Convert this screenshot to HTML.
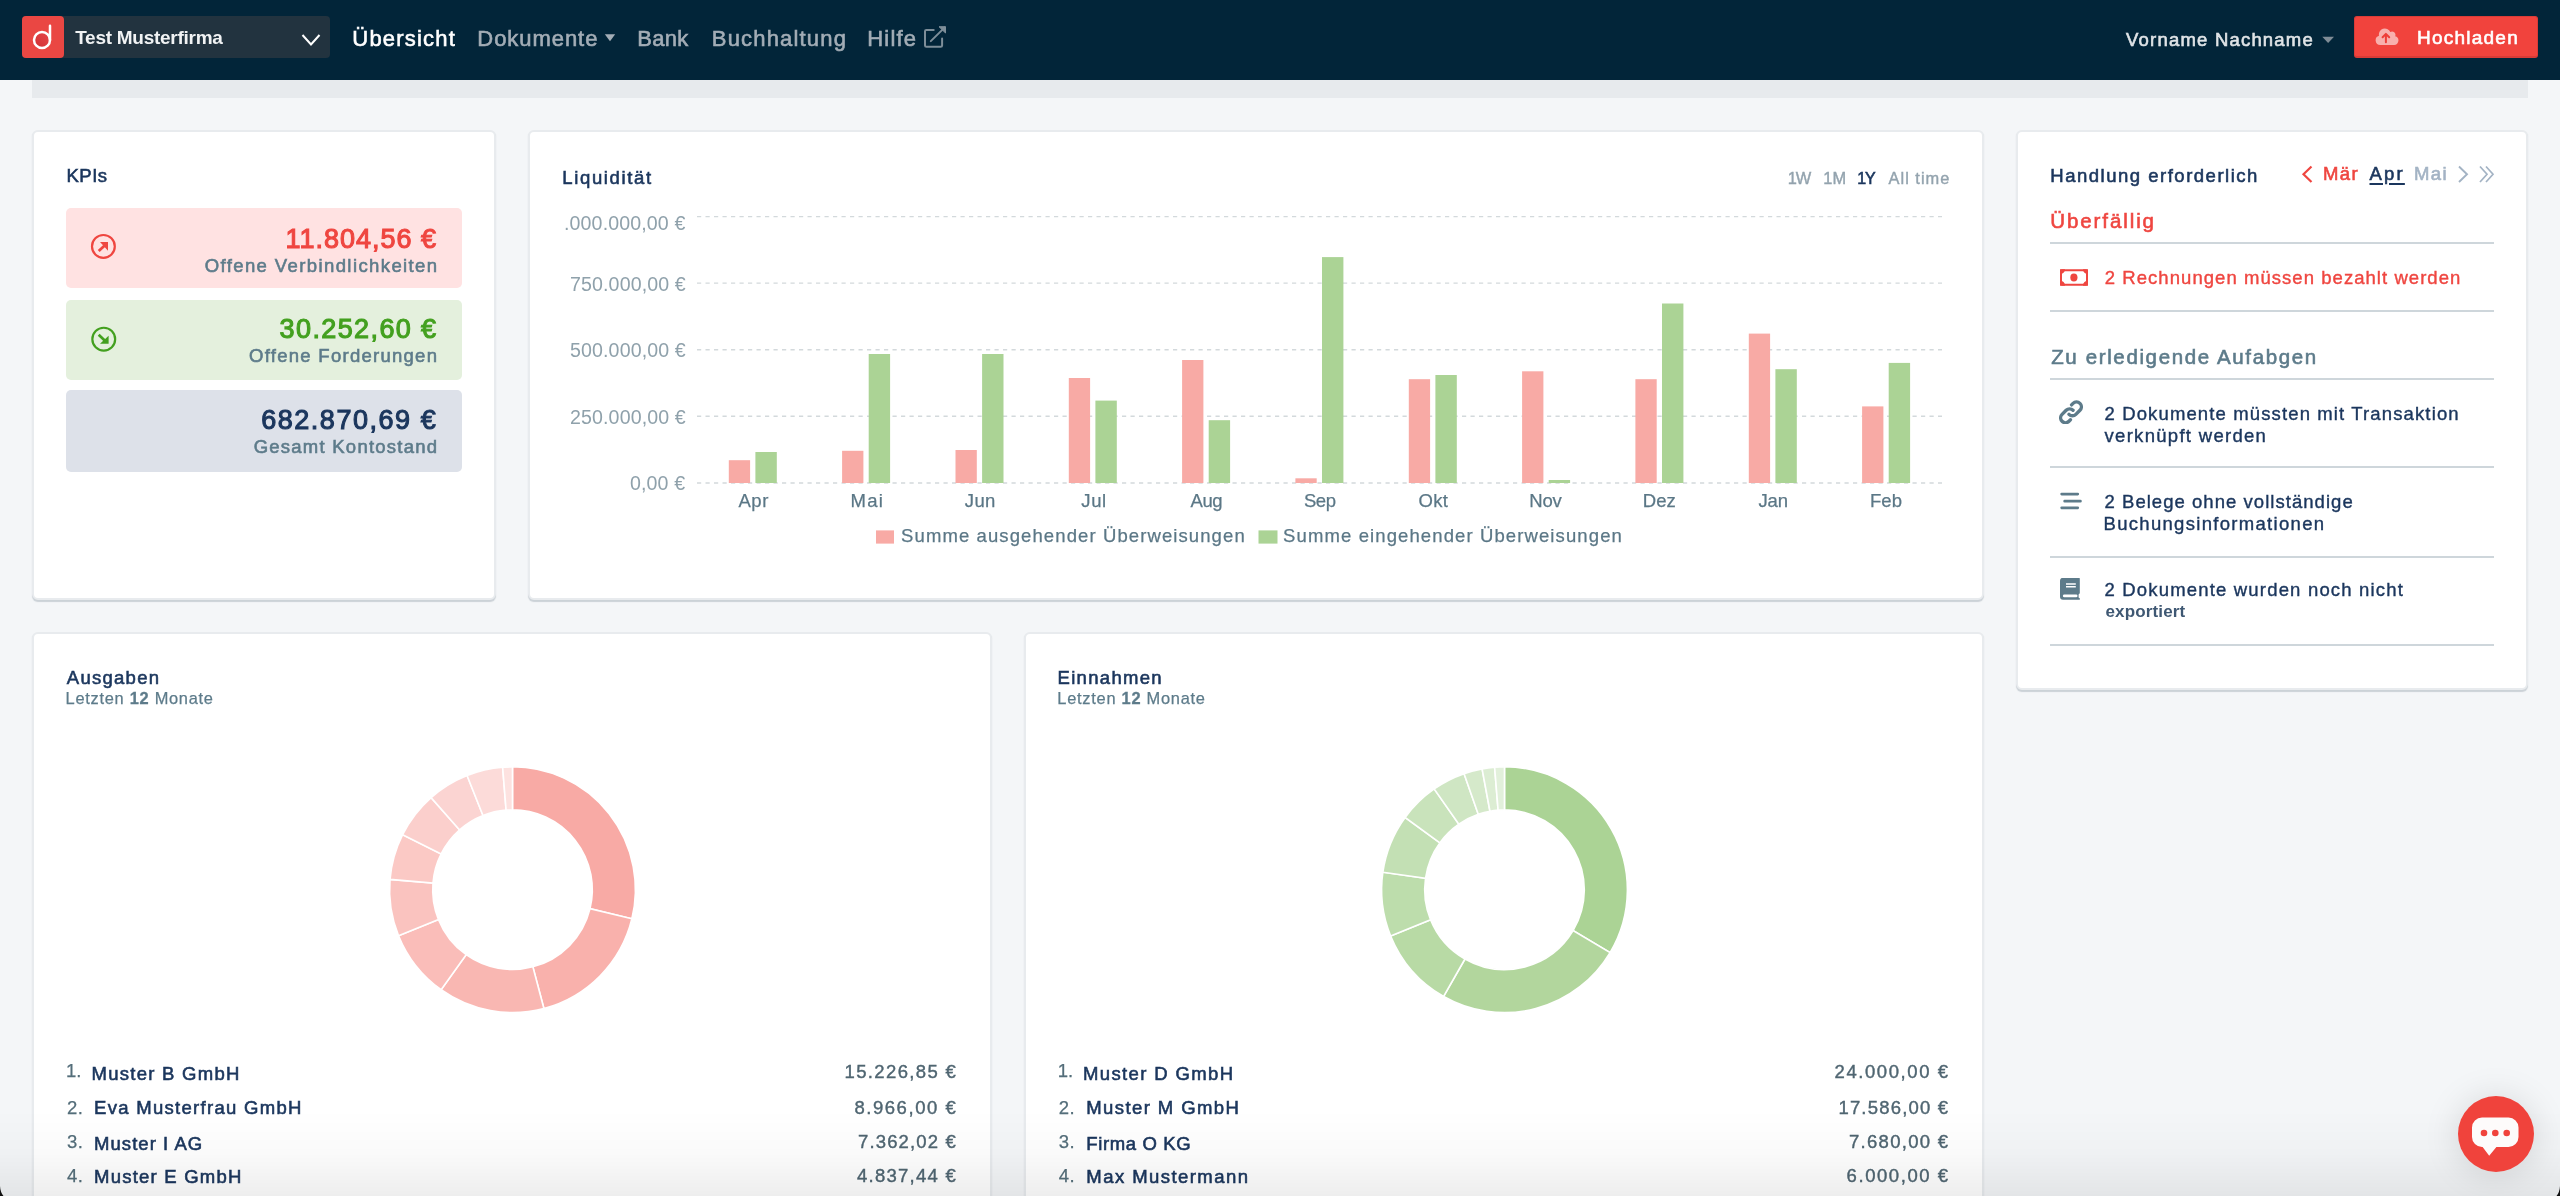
<!DOCTYPE html>
<html lang="de">
<head>
<meta charset="utf-8">
<title>Übersicht</title>
<style>
*{box-sizing:border-box;margin:0;padding:0}
html,body{width:2560px;height:1196px;overflow:hidden;background:#f4f6f8}
body{font-family:"Liberation Sans",sans-serif;color:#1b365d;position:relative}
.abs{position:absolute}
.lt{-webkit-text-stroke:0.25px currentColor}
.med{-webkit-text-stroke:0.4px currentColor}
.semi{-webkit-text-stroke:0.6px currentColor}
.hv{-webkit-text-stroke:1.1px currentColor}
.b{font-weight:bold}
.t b{-webkit-text-stroke:0.3px currentColor}
#nav{position:absolute;left:0;top:0;width:2560px;height:80px;background:#022539}
#strip{position:absolute;left:32px;top:80px;width:2496px;height:18px;background:#e7eaed}
.card{position:absolute;background:#fff;border:2px solid #e8ebee;border-radius:6px;box-shadow:0 1.5px 1px rgba(110,125,140,.30)}
.t{position:absolute;white-space:nowrap;line-height:1}
#texts{position:absolute;left:0;top:0;width:2560px;height:1196px;will-change:transform}
.hr{position:absolute;left:2050px;width:444px;height:2px;background:#ced6db}
.yl{will-change:transform;position:absolute;right:0;white-space:nowrap;line-height:1;font-size:19.600px;color:#8fa1ab;letter-spacing:.12px;margin-right:-.12px}
</style>
</head>
<body>
<div id="nav">
  <div class="abs" style="left:22px;top:16px;width:308px;height:42px;background:#22333f;border-radius:4px"></div>
  <div class="abs" style="left:22px;top:16px;width:42px;height:42px;background:#ea4743;border-radius:4px">
    <svg width="42" height="42" viewBox="0 0 42 42"><defs><linearGradient id="lg" x1="0" y1="1" x2="1" y2="0"><stop offset="0" stop-color="#cf3034"/><stop offset="1" stop-color="#e8484a"/></linearGradient></defs><circle cx="20" cy="24" r="8" fill="url(#lg)" stroke="#fff" stroke-width="2.500"/><path d="M28 9.800V24" stroke="#fff" stroke-width="2.500" stroke-linecap="round" fill="none"/></svg>
  </div>
  <svg class="abs" style="left:300px;top:32px" width="22" height="16" viewBox="0 0 22 16"><path d="M2.500 3L11 12.500L19.500 3" stroke="#fff" stroke-width="2" fill="none"/></svg>
  <svg class="abs" style="left:600px;top:30px" width="20" height="16" viewBox="0 0 20 16"><path d="M4.800 4.300H15.200L10 11.200Z" fill="#a3adb6"/></svg>
  <svg class="abs" style="left:923px;top:25px" width="26" height="24" viewBox="0 0 26 24" fill="none" stroke="#7e8e99" stroke-width="2" stroke-linecap="round"><path d="M10.700 4.900H3.400A1.400 1.400 0 0 0 2 6.300V20.400A1.400 1.400 0 0 0 3.400 21.800H17.700A1.400 1.400 0 0 0 19.100 20.400V13.600"/><path d="M7.800 16.100L21.800 2.400"/><path d="M16 1.700H22.500V8Z" fill="#7e8e99" stroke-width="1" stroke-linejoin="miter" stroke-linecap="butt"/></svg>
  <svg class="abs" style="left:2318px;top:32px" width="20" height="16" viewBox="0 0 20 16"><path d="M4.300 4.700H16L10.150 11.100Z" fill="#7f8c96"/></svg>
  <div class="abs" style="left:2354px;top:16px;width:184px;height:42px;background:#f1433d;border-radius:3px;border:1px solid #d93b37;border-bottom-width:2px"></div>
  <svg class="abs" style="left:2375px;top:27px" width="24" height="19" viewBox="0 0 24 19"><path d="M5.300 18A4.700 4.700 0 0 1 4 8.800A6 6 0 0 1 15.300 5A3.400 3.400 0 0 1 20.200 9.200A4.500 4.500 0 0 1 18.600 18Z" fill="#f8b0ad"/><path d="M10.900 15.300V7M7.600 10.300L10.900 6.900L14.200 10.300" stroke="#ee3e38" stroke-width="2" stroke-linecap="round" stroke-linejoin="round" fill="none"/></svg>
</div>
<div id="strip"></div>

<div class="card" style="left:32px;top:130px;width:464px;height:470px"></div>
<div class="card" style="left:528px;top:130px;width:1456px;height:470px"></div>
<div class="card" style="left:2016px;top:130px;width:512px;height:560px"></div>
<div class="card" style="left:32px;top:632px;width:960px;height:600px"></div>
<div class="card" style="left:1024px;top:632px;width:960px;height:600px"></div>

<div class="abs" style="left:66px;top:208px;width:396px;height:80px;background:#ffe2e2;border-radius:5px"></div>
<div class="abs" style="left:66px;top:300px;width:396px;height:80px;background:#e4f0dd;border-radius:5px"></div>
<div class="abs" style="left:66px;top:390px;width:396px;height:82px;background:#dde1e9;border-radius:5px"></div>
<svg class="abs" style="left:89px;top:232px" width="30" height="30" viewBox="0 0 30 30"><circle cx="14.400" cy="14.400" r="11.400" fill="none" stroke="#ef4640" stroke-width="2.200"/><path d="M9.700 19.100L15.700 13.400" stroke="#ef4640" stroke-width="2.700" fill="none"/><path d="M11 10H19V18.700Z" fill="#ef4640"/></svg>
<svg class="abs" style="left:89px;top:325px" width="30" height="30" viewBox="0 0 30 30"><circle cx="14.750" cy="14.150" r="11.400" fill="none" stroke="#43a01f" stroke-width="2.200"/><path d="M9.700 9.700L15.700 15.400" stroke="#43a01f" stroke-width="2.700" fill="none"/><path d="M19.600 10.700V18.800H11Z" fill="#43a01f"/></svg>

<div class="abs" style="left:564.500px;top:200px;width:121px;height:300px;overflow:hidden">
  <div class="yl" style="top:213.800px;margin-top:-200px">1.000.000,00 €</div>
  <div class="yl" style="top:274.500px;margin-top:-200px">750.000,00 €</div>
  <div class="yl" style="top:341.100px;margin-top:-200px">500.000,00 €</div>
  <div class="yl" style="top:407.700px;margin-top:-200px">250.000,00 €</div>
  <div class="yl" style="top:474.400px;margin-top:-200px">0,00 €</div>
</div>

<svg class="abs" style="left:0;top:0" width="2560" height="1196" viewBox="0 0 2560 1196">
<path d="M697 216.6H1942" stroke="#d3d9dc" stroke-width="1.4" stroke-dasharray="4.2 4.3" fill="none"/>
<path d="M697 283.1H1942" stroke="#d3d9dc" stroke-width="1.4" stroke-dasharray="4.2 4.3" fill="none"/>
<path d="M697 349.7H1942" stroke="#d3d9dc" stroke-width="1.4" stroke-dasharray="4.2 4.3" fill="none"/>
<path d="M697 416.3H1942" stroke="#d3d9dc" stroke-width="1.4" stroke-dasharray="4.2 4.3" fill="none"/>
<path d="M697 483.0H1942" stroke="#d3d9dc" stroke-width="1.4" stroke-dasharray="4.2 4.3" fill="none"/>
<rect x="728.8" y="460.2" width="21.3" height="22.8" fill="#f8aaa5"/>
<rect x="755.4" y="452" width="21.4" height="31.0" fill="#abd395"/>
<rect x="842.1" y="450.8" width="21.3" height="32.2" fill="#f8aaa5"/>
<rect x="868.7" y="354" width="21.4" height="129.0" fill="#abd395"/>
<rect x="955.5" y="450" width="21.3" height="33.0" fill="#f8aaa5"/>
<rect x="982.1" y="354" width="21.4" height="129.0" fill="#abd395"/>
<rect x="1068.8" y="378" width="21.3" height="105.0" fill="#f8aaa5"/>
<rect x="1095.4" y="400.6" width="21.4" height="82.4" fill="#abd395"/>
<rect x="1182.1" y="360" width="21.3" height="123.0" fill="#f8aaa5"/>
<rect x="1208.7" y="420.2" width="21.4" height="62.8" fill="#abd395"/>
<rect x="1295.4" y="478.3" width="21.3" height="4.7" fill="#f8aaa5"/>
<rect x="1322.0" y="257.1" width="21.4" height="225.9" fill="#abd395"/>
<rect x="1408.8" y="379.2" width="21.3" height="103.8" fill="#f8aaa5"/>
<rect x="1435.4" y="375" width="21.4" height="108.0" fill="#abd395"/>
<rect x="1522.1" y="371.3" width="21.3" height="111.7" fill="#f8aaa5"/>
<rect x="1548.7" y="480" width="21.4" height="3.0" fill="#abd395"/>
<rect x="1635.4" y="379.2" width="21.3" height="103.8" fill="#f8aaa5"/>
<rect x="1662.0" y="303.5" width="21.4" height="179.5" fill="#abd395"/>
<rect x="1748.8" y="333.6" width="21.3" height="149.4" fill="#f8aaa5"/>
<rect x="1775.4" y="369.2" width="21.4" height="113.8" fill="#abd395"/>
<rect x="1862.1" y="406.4" width="21.3" height="76.6" fill="#f8aaa5"/>
<rect x="1888.7" y="362.9" width="21.4" height="120.1" fill="#abd395"/>
<rect x="876" y="530.4" width="18" height="13.2" fill="#f8aaa5"/>
<rect x="1258.5" y="530.4" width="19" height="13.2" fill="#abd395"/>
<path d="M512.50 766.80A122.9 122.9 0 0 1 631.90 918.81L590.03 908.60A79.8 79.8 0 0 0 512.50 809.90Z" fill="#f8aaa5" fill-opacity="1" stroke="#fff" stroke-width="1.6"/>
<path d="M631.90 918.81A122.9 122.9 0 0 1 543.89 1008.52L532.88 966.85A79.8 79.8 0 0 0 590.03 908.60Z" fill="#f8aaa5" fill-opacity="0.92" stroke="#fff" stroke-width="1.6"/>
<path d="M543.89 1008.52A122.9 122.9 0 0 1 441.13 989.75L466.16 954.67A79.8 79.8 0 0 0 532.88 966.85Z" fill="#f8aaa5" fill-opacity="0.85" stroke="#fff" stroke-width="1.6"/>
<path d="M441.13 989.75A122.9 122.9 0 0 1 398.55 935.74L438.51 919.59A79.8 79.8 0 0 0 466.16 954.67Z" fill="#f8aaa5" fill-opacity="0.78" stroke="#fff" stroke-width="1.6"/>
<path d="M398.55 935.74A122.9 122.9 0 0 1 390.03 879.42L432.98 883.02A79.8 79.8 0 0 0 438.51 919.59Z" fill="#f8aaa5" fill-opacity="0.71" stroke="#fff" stroke-width="1.6"/>
<path d="M390.03 879.42A122.9 122.9 0 0 1 402.61 834.67L441.15 853.97A79.8 79.8 0 0 0 432.98 883.02Z" fill="#f8aaa5" fill-opacity="0.64" stroke="#fff" stroke-width="1.6"/>
<path d="M402.61 834.67A122.9 122.9 0 0 1 431.06 797.65L459.62 829.93A79.8 79.8 0 0 0 441.15 853.97Z" fill="#f8aaa5" fill-opacity="0.57" stroke="#fff" stroke-width="1.6"/>
<path d="M431.06 797.65A122.9 122.9 0 0 1 467.06 775.51L482.99 815.56A79.8 79.8 0 0 0 459.62 829.93Z" fill="#f8aaa5" fill-opacity="0.5" stroke="#fff" stroke-width="1.6"/>
<path d="M467.06 775.51A122.9 122.9 0 0 1 502.64 767.20L506.10 810.16A79.8 79.8 0 0 0 482.99 815.56Z" fill="#f8aaa5" fill-opacity="0.42" stroke="#fff" stroke-width="1.6"/>
<path d="M502.64 767.20A122.9 122.9 0 0 1 512.50 766.80L512.50 809.90A79.8 79.8 0 0 0 506.10 810.16Z" fill="#f8aaa5" fill-opacity="0.34" stroke="#fff" stroke-width="1.6"/>
<path d="M1504.50 766.80A122.9 122.9 0 0 1 1610.07 952.63L1573.04 930.56A79.8 79.8 0 0 0 1504.50 809.90Z" fill="#abd395" fill-opacity="1" stroke="#fff" stroke-width="1.6"/>
<path d="M1610.07 952.63A122.9 122.9 0 0 1 1443.61 996.45L1464.96 959.02A79.8 79.8 0 0 0 1573.04 930.56Z" fill="#abd395" fill-opacity="0.92" stroke="#fff" stroke-width="1.6"/>
<path d="M1443.61 996.45A122.9 122.9 0 0 1 1390.63 935.94L1430.56 919.72A79.8 79.8 0 0 0 1464.96 959.02Z" fill="#abd395" fill-opacity="0.85" stroke="#fff" stroke-width="1.6"/>
<path d="M1390.63 935.94A122.9 122.9 0 0 1 1382.86 872.17L1425.52 878.32A79.8 79.8 0 0 0 1430.56 919.72Z" fill="#abd395" fill-opacity="0.78" stroke="#fff" stroke-width="1.6"/>
<path d="M1382.86 872.17A122.9 122.9 0 0 1 1405.07 817.46L1439.94 842.79A79.8 79.8 0 0 0 1425.52 878.32Z" fill="#abd395" fill-opacity="0.71" stroke="#fff" stroke-width="1.6"/>
<path d="M1405.07 817.46A122.9 122.9 0 0 1 1434.18 788.90L1458.84 824.25A79.8 79.8 0 0 0 1439.94 842.79Z" fill="#abd395" fill-opacity="0.64" stroke="#fff" stroke-width="1.6"/>
<path d="M1434.18 788.90A122.9 122.9 0 0 1 1464.08 773.64L1478.26 814.34A79.8 79.8 0 0 0 1458.84 824.25Z" fill="#abd395" fill-opacity="0.57" stroke="#fff" stroke-width="1.6"/>
<path d="M1464.08 773.64A122.9 122.9 0 0 1 1482.10 768.86L1489.96 811.24A79.8 79.8 0 0 0 1478.26 814.34Z" fill="#abd395" fill-opacity="0.5" stroke="#fff" stroke-width="1.6"/>
<path d="M1482.10 768.86A122.9 122.9 0 0 1 1494.64 767.20L1498.10 810.16A79.8 79.8 0 0 0 1489.96 811.24Z" fill="#abd395" fill-opacity="0.42" stroke="#fff" stroke-width="1.6"/>
<path d="M1494.64 767.20A122.9 122.9 0 0 1 1504.50 766.80L1504.50 809.90A79.8 79.8 0 0 0 1498.10 810.16Z" fill="#abd395" fill-opacity="0.34" stroke="#fff" stroke-width="1.6"/>
</svg>

<div class="hr" style="top:242px"></div>
<div class="hr" style="top:310px"></div>
<div class="hr" style="top:378px"></div>
<div class="hr" style="top:466px"></div>
<div class="hr" style="top:556px"></div>
<div class="hr" style="top:644px"></div>
<svg class="abs" style="left:2296px;top:159.500px" width="204" height="28" viewBox="0 0 204 28" fill="none" stroke-width="2.200"><path d="M15.500 6.500L7.500 14.200L15.500 22" stroke="#ef4640"/><path d="M163 6.500L171 14.200L163 22" stroke="#a3b3c4" stroke-width="1.900"/><path d="M184 6.500L191 14.200L184 22M190 6.500L197 14.200L190 22" stroke="#a3b3c4" stroke-width="1.700"/></svg>
<!-- money icon -->
<svg class="abs" style="left:2060px;top:268.500px" width="28" height="17" viewBox="0 0 28 17"><rect x="1" y="1.200" width="26" height="14.450" rx="1" fill="none" stroke="#ef4640" stroke-width="2"/><ellipse cx="13.900" cy="8.400" rx="3.600" ry="4" fill="#ef4640"/><path d="M0 5.200A5 5 0 0 0 5 .200H0ZM28 5.200A5 5 0 0 1 23 .200H28ZM0 11.650A5 5 0 0 1 5 16.650H0ZM28 11.650A5 5 0 0 0 23 16.650H28Z" fill="#ef4640"/></svg>
<!-- link icon -->
<svg class="abs" style="left:2059px;top:400px" width="24" height="24" viewBox="0 0 24 24" fill="none" stroke="#5d7b8a" stroke-width="3" stroke-linecap="round"><g transform="translate(12 12.300) scale(1.13) translate(-12 -12)"><path d="M10.200 13.800a4.300 4.300 0 0 0 6.100 0l3.600-3.600a4.300 4.300 0 0 0-6.100-6.100l-1.300 1.300"/><path d="M13.800 10.200a4.300 4.300 0 0 0-6.100 0l-3.600 3.600a4.300 4.300 0 0 0 6.100 6.100l1.300-1.300"/></g></svg>
<!-- list icon -->
<svg class="abs" style="left:2059px;top:492px" width="24" height="18" viewBox="0 0 24 18" stroke="#5d7b8a" stroke-width="2.700" stroke-linecap="round"><path d="M2.650 2.050H18.750M5.650 9.150H21.450M2.650 15.850H18.750"/></svg>
<!-- book icon -->
<svg class="abs" style="left:2059px;top:578px" width="22" height="22" viewBox="0 0 22 22"><path d="M4 -.200H19.800A1 1 0 0 1 20.800 .800V15.200L19.600 16.400V19.600L20.800 20.300V21.800H4A3 3 0 0 1 1 18.800V2.800A3 3 0 0 1 4 -.200Z" fill="#5d7b8a"/><rect x="3.900" y="16.400" width="14.600" height="2.900" rx="1.400" fill="#fff"/><path d="M7 6.050H16.800M7 8.800H16.800" stroke="#fff" stroke-width="1.400"/></svg>

<div id="texts">
<div class="t b" style="left:75.2px;top:28px;font-size:19px;color:#f1f3f4;letter-spacing:-0.27px;">Test Musterfirma</div>
<div class="t semi" style="left:352.3px;top:28px;font-size:22px;color:#fff;letter-spacing:1.20px;">Übersicht</div>
<div class="t semi" style="left:477.3px;top:28px;font-size:22px;color:#a3adb6;letter-spacing:0.95px;">Dokumente</div>
<div class="t semi" style="left:637.3px;top:28px;font-size:22px;color:#a3adb6;letter-spacing:0.25px;">Bank</div>
<div class="t semi" style="left:711.8px;top:28px;font-size:22px;color:#a3adb6;letter-spacing:1.18px;">Buchhaltung</div>
<div class="t semi" style="left:867.3px;top:28px;font-size:22px;color:#a3adb6;letter-spacing:1.16px;">Hilfe</div>
<div class="t semi" style="left:2126.1px;top:31px;font-size:18.5px;color:#e0e4e7;letter-spacing:1.20px;">Vorname Nachname</div>
<div class="t semi" style="left:2417.1px;top:28px;font-size:19px;color:#fff;letter-spacing:1.22px;">Hochladen</div>
<div class="t semi" style="left:66.6px;top:167px;font-size:18.5px;color:#1b365d;letter-spacing:0.43px;">KPIs</div>
<div class="t hv" style="left:285.6px;top:226px;font-size:27px;color:#ef4640;letter-spacing:0.99px;">11.804,56 €</div>
<div class="t semi" style="left:204.7px;top:257px;font-size:18.5px;color:#5d7b8a;letter-spacing:1.40px;">Offene Verbindlichkeiten</div>
<div class="t hv" style="left:279.6px;top:316px;font-size:27px;color:#43a01f;letter-spacing:1.39px;">30.252,60 €</div>
<div class="t semi" style="left:249.1px;top:347px;font-size:18.5px;color:#5d7b8a;letter-spacing:1.27px;">Offene Forderungen</div>
<div class="t hv" style="left:261.2px;top:407px;font-size:27px;color:#1b365d;letter-spacing:1.53px;">682.870,69 €</div>
<div class="t semi" style="left:253.7px;top:438px;font-size:18.5px;color:#5d7b8a;letter-spacing:1.24px;">Gesamt Kontostand</div>
<div class="t semi" style="left:562.3px;top:169px;font-size:18.5px;color:#1b365d;letter-spacing:1.64px;">Liquidität</div>
<div class="t med" style="left:1787.7px;top:170px;font-size:16.4px;color:#93a3ae;letter-spacing:-1.02px;">1W</div>
<div class="t med" style="left:1823.2px;top:170px;font-size:16.4px;color:#93a3ae;letter-spacing:0.28px;">1M</div>
<div class="t semi" style="left:1857.2px;top:171px;font-size:16px;color:#1b365d;letter-spacing:-1.10px;">1Y</div>
<div class="t med" style="left:1888.6px;top:170px;font-size:16.4px;color:#93a3ae;letter-spacing:1.00px;">All time</div>
<div class="t lt" style="left:738.5px;top:492px;font-size:18.5px;color:#5b7786;letter-spacing:0.51px;">Apr</div>
<div class="t lt" style="left:850.5px;top:492px;font-size:18.5px;color:#5b7786;letter-spacing:1.28px;">Mai</div>
<div class="t lt" style="left:964.8px;top:492px;font-size:18.5px;color:#5b7786;letter-spacing:0.36px;">Jun</div>
<div class="t lt" style="left:1081.3px;top:492px;font-size:18.5px;color:#5b7786;letter-spacing:0.61px;">Jul</div>
<div class="t lt" style="left:1190.6px;top:492px;font-size:18.5px;color:#5b7786;letter-spacing:-0.44px;">Aug</div>
<div class="t lt" style="left:1303.9px;top:492px;font-size:18.5px;color:#5b7786;letter-spacing:-0.44px;">Sep</div>
<div class="t lt" style="left:1418.5px;top:492px;font-size:18.5px;color:#5b7786;letter-spacing:0.31px;">Okt</div>
<div class="t lt" style="left:1529.3px;top:492px;font-size:18.5px;color:#5b7786;letter-spacing:-0.20px;">Nov</div>
<div class="t lt" style="left:1642.8px;top:492px;font-size:18.5px;color:#5b7786;letter-spacing:0.05px;">Dez</div>
<div class="t lt" style="left:1758.4px;top:492px;font-size:18.5px;color:#5b7786;letter-spacing:-0.14px;">Jan</div>
<div class="t lt" style="left:1869.9px;top:492px;font-size:18.5px;color:#5b7786;letter-spacing:0.08px;">Feb</div>
<div class="t lt" style="left:901.1px;top:527px;font-size:18.5px;color:#5b7786;letter-spacing:1.10px;">Summe ausgehender Überweisungen</div>
<div class="t lt" style="left:1283.1px;top:527px;font-size:18.5px;color:#5b7786;letter-spacing:1.11px;">Summe eingehender Überweisungen</div>
<div class="t semi" style="left:2050.3px;top:167px;font-size:18.5px;color:#1b365d;letter-spacing:1.51px;">Handlung erforderlich</div>
<div class="t semi" style="left:2323.0px;top:165px;font-size:18.5px;color:#ef4640;letter-spacing:1.40px;">Mär</div>
<div class="t semi" style="left:2369.5px;top:165px;font-size:18.5px;color:#1b365d;letter-spacing:2.19px;text-decoration:underline;text-decoration-thickness:1.6px;text-underline-offset:2.6px;">Apr</div>
<div class="t semi" style="left:2414.1px;top:165px;font-size:18.5px;color:#a3b3c4;letter-spacing:1.35px;">Mai</div>
<div class="t semi" style="left:2050.3px;top:211px;font-size:20.5px;color:#ef4640;letter-spacing:1.90px;">Überfällig</div>
<div class="t med" style="left:2104.8px;top:269px;font-size:18.5px;color:#ef4640;letter-spacing:1.05px;">2 Rechnungen müssen bezahlt werden</div>
<div class="t semi" style="left:2051.2px;top:347px;font-size:20.5px;color:#5d7b8a;letter-spacing:1.63px;">Zu erledigende Aufabgen</div>
<div class="t med" style="left:2104.5px;top:405px;font-size:18.5px;color:#1b365d;letter-spacing:1.13px;">2 Dokumente müssten mit Transaktion</div>
<div class="t med" style="left:2104.5px;top:427px;font-size:18.5px;color:#1b365d;letter-spacing:1.30px;">verknüpft werden</div>
<div class="t med" style="left:2104.5px;top:493px;font-size:18.5px;color:#1b365d;letter-spacing:1.04px;">2 Belege ohne vollständige</div>
<div class="t med" style="left:2103.5px;top:515px;font-size:18.5px;color:#1b365d;letter-spacing:1.31px;">Buchungsinformationen</div>
<div class="t med" style="left:2104.5px;top:581px;font-size:18.5px;color:#1b365d;letter-spacing:1.18px;">2 Dokumente wurden noch nicht</div>
<div class="t b" style="left:2105.5px;top:603px;font-size:17px;color:#3f5873;letter-spacing:0.14px;">exportiert</div>
<div class="t semi" style="left:66.8px;top:669px;font-size:18.5px;color:#1b365d;letter-spacing:1.27px;">Ausgaben</div>
<div class="t lt" style="left:65.6px;top:690px;font-size:16.4px;color:#5d7b8a;letter-spacing:0.72px;">Letzten <b>12</b> Monate</div>
<div class="t semi" style="left:1057.5px;top:669px;font-size:18.5px;color:#1b365d;letter-spacing:1.32px;">Einnahmen</div>
<div class="t lt" style="left:1057.3px;top:690px;font-size:16.4px;color:#5d7b8a;letter-spacing:0.74px;">Letzten <b>12</b> Monate</div>
<div class="t lt" style="left:66.0px;top:1062px;font-size:18.5px;color:#546e7a;letter-spacing:0.00px;">1.</div>
<div class="t semi" style="left:91.5px;top:1065px;font-size:18.5px;color:#1b365d;letter-spacing:1.27px;">Muster B GmbH</div>
<div class="t med" style="left:844.6px;top:1063px;font-size:18.5px;color:#4f6571;letter-spacing:1.35px;">15.226,85 €</div>
<div class="t lt" style="left:67.0px;top:1099px;font-size:18.5px;color:#546e7a;letter-spacing:0.56px;">2.</div>
<div class="t semi" style="left:94.1px;top:1099px;font-size:18.5px;color:#1b365d;letter-spacing:1.29px;">Eva Musterfrau GmbH</div>
<div class="t med" style="left:854.4px;top:1099px;font-size:18.5px;color:#4f6571;letter-spacing:1.55px;">8.966,00 €</div>
<div class="t lt" style="left:67.0px;top:1133px;font-size:18.5px;color:#546e7a;letter-spacing:0.56px;">3.</div>
<div class="t semi" style="left:94.1px;top:1135px;font-size:18.5px;color:#1b365d;letter-spacing:1.04px;">Muster I AG</div>
<div class="t med" style="left:858.0px;top:1133px;font-size:18.5px;color:#4f6571;letter-spacing:1.15px;">7.362,02 €</div>
<div class="t lt" style="left:67.0px;top:1167px;font-size:18.5px;color:#546e7a;letter-spacing:0.56px;">4.</div>
<div class="t semi" style="left:94.1px;top:1168px;font-size:18.5px;color:#1b365d;letter-spacing:1.22px;">Muster E GmbH</div>
<div class="t med" style="left:857.0px;top:1167px;font-size:18.5px;color:#4f6571;letter-spacing:1.26px;">4.837,44 €</div>
<div class="t lt" style="left:1057.7px;top:1062px;font-size:18.5px;color:#546e7a;letter-spacing:0.00px;">1.</div>
<div class="t semi" style="left:1083.0px;top:1065px;font-size:18.5px;color:#1b365d;letter-spacing:1.37px;">Muster D GmbH</div>
<div class="t med" style="left:1834.5px;top:1063px;font-size:18.5px;color:#4f6571;letter-spacing:1.59px;">24.000,00 €</div>
<div class="t lt" style="left:1058.7px;top:1099px;font-size:18.5px;color:#546e7a;letter-spacing:0.56px;">2.</div>
<div class="t semi" style="left:1086.3px;top:1099px;font-size:18.5px;color:#1b365d;letter-spacing:1.41px;">Muster M GmbH</div>
<div class="t med" style="left:1838.4px;top:1099px;font-size:18.5px;color:#4f6571;letter-spacing:1.20px;">17.586,00 €</div>
<div class="t lt" style="left:1058.7px;top:1133px;font-size:18.5px;color:#546e7a;letter-spacing:0.56px;">3.</div>
<div class="t semi" style="left:1086.3px;top:1135px;font-size:18.5px;color:#1b365d;letter-spacing:0.64px;">Firma O KG</div>
<div class="t med" style="left:1849.0px;top:1133px;font-size:18.5px;color:#4f6571;letter-spacing:1.29px;">7.680,00 €</div>
<div class="t lt" style="left:1058.7px;top:1167px;font-size:18.5px;color:#546e7a;letter-spacing:0.56px;">4.</div>
<div class="t semi" style="left:1086.3px;top:1168px;font-size:18.5px;color:#1b365d;letter-spacing:1.44px;">Max Mustermann</div>
<div class="t med" style="left:1846.6px;top:1167px;font-size:18.5px;color:#4f6571;letter-spacing:1.56px;">6.000,00 €</div>
</div>

<!-- bottom fade -->
<div class="abs" style="left:0;top:1110px;width:2560px;height:86px;background:linear-gradient(to bottom,rgba(0,0,0,0) 0%,rgba(0,0,0,.02) 50%,rgba(0,0,0,.068) 100%)"></div>
<!-- chat -->
<div class="abs" style="left:2458px;top:1096px;width:76px;height:76px;border-radius:50%;background:#f0433c;box-shadow:0 2px 36px rgba(0,0,0,.13)"></div>
<svg class="abs" style="left:2470px;top:1115px" width="52" height="44" viewBox="0 0 52 44"><path d="M12 2.600H38.500A10 10 0 0 1 48.500 12.600V22A10 10 0 0 1 38.500 32H26.400L19.200 40.800L12.600 32H12A10 10 0 0 1 2 22V12.600A10 10 0 0 1 12 2.600Z" fill="#fdfbfb"/><circle cx="14" cy="18" r="3.300" fill="#f0433c"/><circle cx="25.300" cy="18" r="3.300" fill="#f0433c"/><circle cx="36.700" cy="18" r="3.300" fill="#f0433c"/></svg>
<!-- window corners -->
<svg class="abs" style="left:0;top:1186px" width="10" height="10" viewBox="0 0 10 10"><path d="M0 0Q.400 6.500 3.500 10H0Z" fill="#111"/></svg>
<svg class="abs" style="left:2550px;top:1186px" width="10" height="10" viewBox="0 0 10 10"><path d="M10 0Q9.600 6.500 6.500 10H10Z" fill="#111"/></svg>
</body>
</html>
